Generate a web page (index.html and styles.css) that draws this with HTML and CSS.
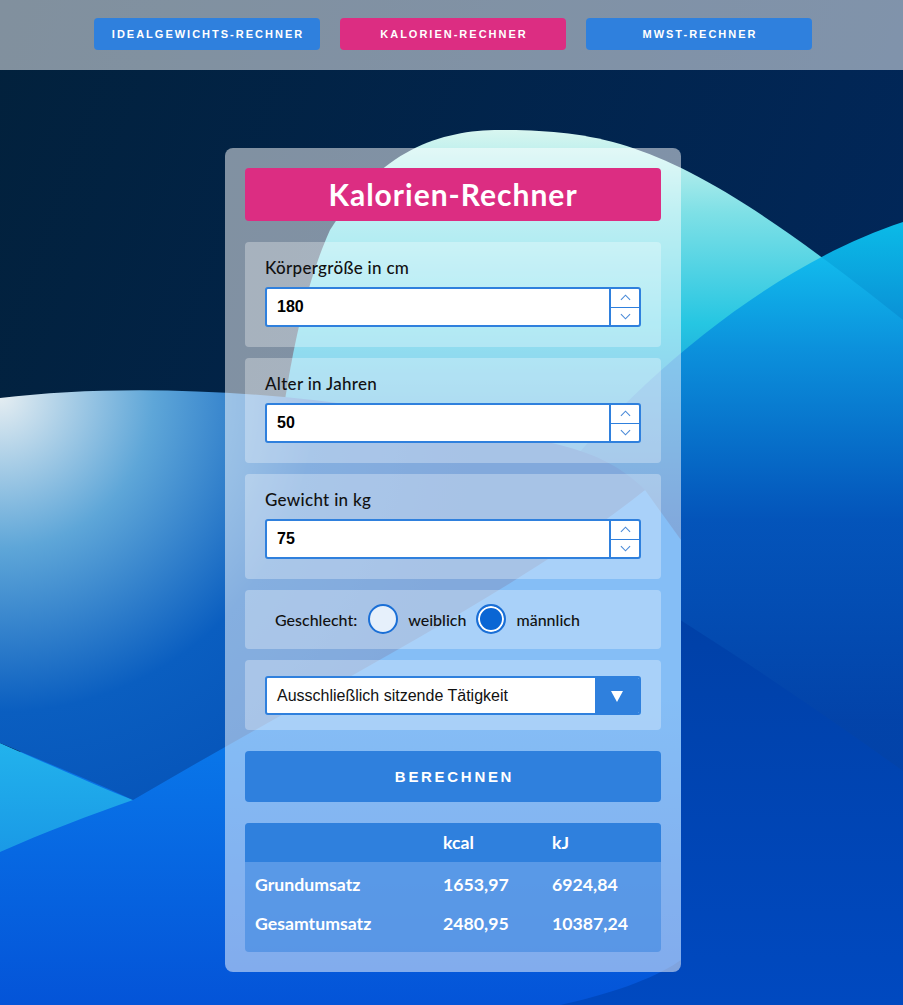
FILE: index.html
```html
<!DOCTYPE html>
<html lang="de">
<head>
<meta charset="utf-8">
<title>Kalorien-Rechner</title>
<link rel="stylesheet" href="styles.css">
</head>
<body>
<div class="backdrop" aria-hidden="true">
  <svg class="backdrop-svg" viewBox="0 0 903 1005" preserveAspectRatio="none">
    <defs>
      <linearGradient id="sky" x1="0" y1="0" x2="1" y2="0.4">
        <stop offset="0" stop-color="#02213c"/>
        <stop offset="1" stop-color="#01275a"/>
      </linearGradient>
      <linearGradient id="hump" gradientUnits="userSpaceOnUse" x1="0" y1="130" x2="0" y2="820">
        <stop offset="0" stop-color="#d8f6f0"/>
        <stop offset="0.12" stop-color="#7ee0e6"/>
        <stop offset="0.28" stop-color="#26c6e2"/>
        <stop offset="0.52" stop-color="#0a6ed0"/>
        <stop offset="1" stop-color="#0846ae"/>
      </linearGradient>
      <linearGradient id="rhump" gradientUnits="userSpaceOnUse" x1="0" y1="222" x2="0" y2="720">
        <stop offset="0" stop-color="#0cc8f4"/>
        <stop offset="0.25" stop-color="#0a8edc"/>
        <stop offset="0.6" stop-color="#0352b8"/>
        <stop offset="1" stop-color="#0242a8"/>
      </linearGradient>
      <linearGradient id="deep" gradientUnits="userSpaceOnUse" x1="0" y1="600" x2="0" y2="1005">
        <stop offset="0" stop-color="#0040a6"/>
        <stop offset="1" stop-color="#0049c0"/>
      </linearGradient>
      <linearGradient id="bright" gradientUnits="userSpaceOnUse" x1="0" y1="700" x2="0" y2="1005">
        <stop offset="0" stop-color="#0a7cec"/>
        <stop offset="1" stop-color="#0454d8"/>
      </linearGradient>
      <radialGradient id="lwave" gradientUnits="userSpaceOnUse" cx="0" cy="395" r="480">
        <stop offset="0" stop-color="#e6eef2"/>
        <stop offset="0.32" stop-color="#5ea6d8"/>
        <stop offset="0.66" stop-color="#0a5ec0"/>
        <stop offset="1" stop-color="#0552b8"/>
      </radialGradient>
      <linearGradient id="wedge" gradientUnits="userSpaceOnUse" x1="0" y1="745" x2="0" y2="850">
        <stop offset="0" stop-color="#22b2ec"/>
        <stop offset="1" stop-color="#1a9ae6"/>
      </linearGradient>
    </defs>
    <rect x="0" y="0" width="903" height="1005" fill="url(#sky)"/>
    <path d="M 265 1005 C 255 700, 262 380, 330 230 C 380 150, 440 130, 500 130 C 620 130, 690 150, 903 320 L 903 1005 Z" fill="url(#hump)"/>
    <path d="M 540 500 C 640 370, 780 262, 903 222 L 903 1005 L 540 1005 Z" fill="url(#rhump)" opacity="0.92"/>
    <path d="M 420 470 C 560 540, 750 660, 903 771 L 903 1005 L 420 1005 Z" fill="url(#deep)"/>
    <path d="M 0 760 L 645 490 L 681 540 L 681 960 C 660 975, 620 992, 560 1005 L 0 1005 Z" fill="url(#bright)"/>
    <path d="M 0 743 C 50 765, 95 785, 133 800 C 90 815, 45 832, 0 852 Z" fill="url(#wedge)"/>
    <path d="M 0 398 C 150 380, 350 392, 560 445 C 600 455, 625 470, 645 490 C 520 590, 320 690, 133 800 C 90 780, 40 760, 0 743 Z" fill="url(#lwave)"/>
  </svg>
</div>

<nav class="topnav">
  <a class="navbtn" href="#">Idealgewichts-Rechner</a>
  <a class="navbtn navbtn-active" href="#">Kalorien-Rechner</a>
  <a class="navbtn" href="#">MwSt-Rechner</a>
</nav>

<main class="page">
  <section class="card">
    <h1 class="title">Kalorien-Rechner</h1>

    <div class="group">
      <label class="label" for="height">Körpergröße in cm</label>
      <div class="numfield">
        <input class="numinput" id="height" type="text" value="180">
        <div class="spin">
          <span class="spin-btn spin-up"><svg class="chev" viewBox="0 0 12 7"><polyline points="1,6 6,1 11,6"/></svg></span>
          <span class="spin-btn"><svg class="chev" viewBox="0 0 12 7"><polyline points="1,1 6,6 11,1"/></svg></span>
        </div>
      </div>
    </div>

    <div class="group">
      <label class="label" for="age">Alter in Jahren</label>
      <div class="numfield">
        <input class="numinput" id="age" type="text" value="50">
        <div class="spin">
          <span class="spin-btn spin-up"><svg class="chev" viewBox="0 0 12 7"><polyline points="1,6 6,1 11,6"/></svg></span>
          <span class="spin-btn"><svg class="chev" viewBox="0 0 12 7"><polyline points="1,1 6,6 11,1"/></svg></span>
        </div>
      </div>
    </div>

    <div class="group">
      <label class="label" for="weight">Gewicht in kg</label>
      <div class="numfield">
        <input class="numinput" id="weight" type="text" value="75">
        <div class="spin">
          <span class="spin-btn spin-up"><svg class="chev" viewBox="0 0 12 7"><polyline points="1,6 6,1 11,6"/></svg></span>
          <span class="spin-btn"><svg class="chev" viewBox="0 0 12 7"><polyline points="1,1 6,6 11,1"/></svg></span>
        </div>
      </div>
    </div>

    <div class="group gender">
      <span class="gender-label">Geschlecht:</span>
      <span class="radio"></span>
      <span class="radio-text">weiblich</span>
      <span class="radio radio-checked"></span>
      <span class="radio-text">männlich</span>
    </div>

    <div class="group select-group">
      <div class="select">
        <span class="select-text">Ausschließlich sitzende Tätigkeit</span>
        <span class="select-arrow"><svg class="tri" viewBox="0 0 12 12"><polygon points="0,1 12,1 6,12"/></svg></span>
      </div>
    </div>

    <button class="calc" type="button">Berechnen</button>

    <div class="results">
      <div class="row row-head">
        <span class="cell"></span>
        <span class="cell">kcal</span>
        <span class="cell">kJ</span>
      </div>
      <div class="rows-body">
        <div class="row">
          <span class="cell">Grundumsatz</span>
          <span class="cell">1653,97</span>
          <span class="cell">6924,84</span>
        </div>
        <div class="row">
          <span class="cell">Gesamtumsatz</span>
          <span class="cell">2480,95</span>
          <span class="cell">10387,24</span>
        </div>
      </div>
    </div>
  </section>
</main>
</body>
</html>
```

FILE: styles.css
```css
html {
  background: #02213c;
}

body {
  margin: 0;
  min-height: 1005px;
  font-family: Lato, "Noto Sans", sans-serif;
  color: #111;
  position: relative;
}

.backdrop {
  position: absolute;
  left: 0;
  top: 0;
  width: 100%;
  height: 1005px;
  z-index: -1;
  overflow: hidden;
}

.backdrop-svg {
  display: block;
  width: 100%;
  height: 100%;
}

/* top navigation */
.topnav {
  display: flex;
  justify-content: center;
  gap: 20px;
  height: 70px;
  box-sizing: border-box;
  padding: 18px 0 20px 3px;
  background: rgba(255, 255, 255, 0.5);
}

.navbtn {
  width: 226px;
  height: 32px;
  display: flex;
  align-items: center;
  justify-content: center;
  padding-left: 2px;
  box-sizing: border-box;
  background: #2f80dd;
  color: #fff;
  text-decoration: none;
  text-transform: uppercase;
  font-family: "Liberation Sans", Arial, sans-serif;
  font-weight: 700;
  font-size: 11px;
  letter-spacing: 2px;
  border-radius: 4px;
}

.navbtn-active {
  background: #dc2d82;
}

/* card */
.page {
  display: flex;
  justify-content: center;
  padding: 78px 0 0 3px;
}

.card {
  width: 456px;
  box-sizing: border-box;
  padding: 20px;
  background: rgba(255, 255, 255, 0.5);
  border-radius: 8px;
  display: flex;
  flex-direction: column;
}

.title {
  margin: 0 0 21px;
  height: 53px;
  line-height: 53px;
  background: #dc2d82;
  border-radius: 4px;
  color: #fff;
  text-align: center;
  font-family: Lato, sans-serif;
  font-weight: 700;
  font-size: 30px;
  letter-spacing: 1px;
}

.group {
  background: rgba(255, 255, 255, 0.3);
  border-radius: 4px;
  padding: 14px 20px 20px;
  margin-bottom: 11px;
}

.label {
  display: block;
  font-size: 17px;
  font-weight: 500;
  letter-spacing: 0.3px;
  line-height: 24px;
  margin-bottom: 7px;
  color: #111;
}

.numfield {
  display: flex;
  height: 40px;
  box-sizing: border-box;
  border: 2px solid #2f80dd;
  border-radius: 3px;
  background: #fff;
}

.numinput {
  flex: 1;
  min-width: 0;
  border: none;
  outline: none;
  background: transparent;
  padding: 0 10px;
  font-family: "Liberation Sans", Arial, sans-serif;
  font-weight: 700;
  font-size: 16px;
  color: #000;
}

.spin {
  width: 28px;
  border-left: 2px solid #2f80dd;
  display: flex;
  flex-direction: column;
}

.spin-btn {
  flex: 1;
  display: flex;
  align-items: center;
  justify-content: center;
}

.spin-up {
  border-bottom: 1px solid #2f80dd;
}

.chev {
  width: 11px;
  height: 7px;
  fill: none;
  stroke: #4a8ad8;
  stroke-width: 1.2;
}

/* gender */
.gender {
  display: flex;
  align-items: center;
  gap: 10px;
  padding: 14px 20px 15px 30px;
  font-size: 16px;
  font-weight: 500;
}

.gender-label {
  margin-right: 1px;
}

.radio {
  width: 30px;
  height: 30px;
  box-sizing: border-box;
  border: 2px solid #1a6fd6;
  border-radius: 50%;
  background: #e6f0fb;
}

.radio-checked {
  background: #0a66d4;
  box-shadow: inset 0 0 0 2px #fff;
}

/* select */
.select-group {
  padding: 16px 20px 15px;
}

.select {
  display: flex;
  height: 39px;
  box-sizing: border-box;
  border: 2px solid #2f80dd;
  border-radius: 3px;
  background: #fff;
  overflow: hidden;
}

.select-text {
  flex: 1;
  padding-left: 10px;
  line-height: 35px;
  font-family: "Liberation Sans", Arial, sans-serif;
  font-size: 16px;
  color: #111;
}

.select-arrow {
  width: 44px;
  background: #2f80dd;
  display: flex;
  align-items: center;
  justify-content: center;
}

.tri {
  width: 12px;
  height: 12px;
  fill: #fff;
}

/* button */
.calc {
  margin: 10px 0 21px;
  height: 51px;
  border: none;
  border-radius: 4px;
  background: #2f80dd;
  color: #fff;
  font-family: "Liberation Sans", Arial, sans-serif;
  font-weight: 700;
  font-size: 15px;
  letter-spacing: 2.7px;
  padding: 0 0 0 3px;
  text-transform: uppercase;
}

/* results */
.results {
  border-radius: 4px;
  overflow: hidden;
  background: rgba(47, 128, 221, 0.5);
  color: #fff;
  font-family: Lato, sans-serif;
  font-weight: 700;
  font-size: 17.7px;
}

.row {
  display: grid;
  grid-template-columns: 188px 109px 1fr;
  height: 39px;
  line-height: 39px;
}

.row-head {
  background: #2f80dd;
}

.rows-body {
  padding: 3px 0 9px;
}

.cell {
  padding-left: 10px;
}
```
